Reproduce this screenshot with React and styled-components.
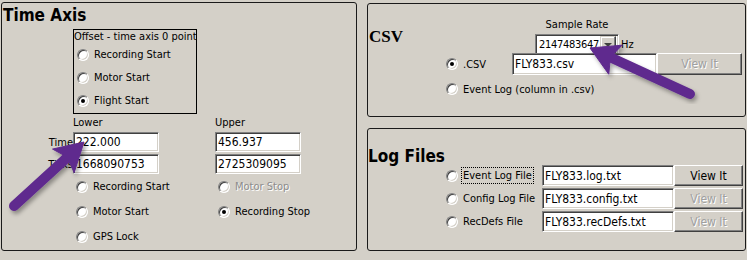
import React from 'react';
import styled, { createGlobalStyle } from 'styled-components';

const UI = `"DejaVu Sans Condensed", "Liberation Sans", sans-serif`;

const GlobalStyle = createGlobalStyle`
  body {
    margin: 0;
    background: #d4d0c8;
    font-family: ${UI};
    font-size: 11px;
    color: #000;
  }
`;

const Page = styled.div`
  position: relative;
  box-sizing: border-box;
  width: 747px;
  height: 260px;
  display: flex;
  padding: 2px 0 0 1px;
  gap: 10px;
`;

const Panel = styled.div`
  box-sizing: border-box;
  border: 1px solid #1a1a1a;
  border-radius: 3px;
  width: ${p => p.$w}px;
  height: ${p => p.$h}px;
  display: flex;
  flex-direction: column;
`;

const RightColumn = styled.div`
  display: flex;
  flex-direction: column;
  gap: 11px;
  padding-top: 1px;
`;

const Title = styled.div`
  box-sizing: border-box;
  flex: none;
  height: ${p => p.$h}px;
  width: ${p => (p.$w ? `${p.$w}px` : 'auto')};
  padding: ${p => p.$pt}px 0 0 ${p => p.$pl || 0}px;
  font-family: ${p => (p.$serif ? `"Liberation Serif", serif` : UI)};
  font-weight: bold;
  font-size: ${p => p.$size || 17}px;
  line-height: ${p => p.$lh || 20}px;
  white-space: nowrap;
`;

const OffsetBox = styled.div`
  box-sizing: border-box;
  margin-left: 71px;
  width: 124px;
  height: 85px;
  border: 1px solid #000;
  display: flex;
  flex-direction: column;
  padding-bottom: 1px;
`;

const BoxCaption = styled.div`
  height: 13px;
  line-height: 13px;
  white-space: nowrap;
`;

const RadioRow = styled.label`
  display: flex;
  align-items: center;
  height: ${p => p.$h}px;
  padding-left: ${p => p.$pl || 0}px;
  color: ${p => (p.$disabled ? '#8c8c8c' : '#000')};
  text-shadow: ${p => (p.$disabled ? '1px 1px #fff' : 'none')};
  white-space: nowrap;
`;

const Radio = styled.span`
  position: relative;
  box-sizing: border-box;
  flex: none;
  width: 12px;
  height: 12px;
  margin-right: 5px;
  border-radius: 50%;
  background: #fff;
  border: 1px solid;
  border-color: #808080 #ffffff #ffffff #808080;
  box-shadow: inset 1px 1px #404040, inset -1px -1px #d4d0c8;
  &::after {
    content: '';
    display: ${p => (p.$checked ? 'block' : 'none')};
    position: absolute;
    left: 3px;
    top: 3px;
    width: 4px;
    height: 4px;
    border-radius: 50%;
    background: #000;
  }
`;

const FieldGrid = styled.div`
  display: grid;
  grid-template-columns: 71px 142px 1fr;
  height: ${p => p.$h}px;
  margin-top: ${p => p.$mt || 0}px;
  align-items: center;
`;

const ColLabel = styled.div`
  align-self: start;
  padding-top: 2px;
  line-height: 14px;
`;

const RowLabel = styled.div`
  text-align: right;
  white-space: nowrap;
`;

const TextBox = styled.div`
  box-sizing: border-box;
  flex: none;
  width: ${p => p.$w}px;
  height: ${p => p.$h || 20}px;
  background: #fff;
  border: 1px solid;
  border-color: #808080 #ffffff #ffffff #808080;
  box-shadow: inset 1px 1px #404040, inset -1px -1px #d4d0c8;
  padding-left: 2px;
  display: flex;
  align-items: center;
  font-size: 12px;
  white-space: nowrap;
  overflow: hidden;
`;

const Button = styled.div`
  box-sizing: border-box;
  flex: none;
  width: ${p => p.$w}px;
  height: ${p => p.$h}px;
  background: #d4d0c8;
  border: 1px solid;
  border-color: #ffffff #404040 #404040 #ffffff;
  box-shadow: inset -1px -1px #808080, inset 1px 1px #d4d0c8;
  display: flex;
  align-items: center;
  justify-content: center;
  font-size: 12px;
  color: ${p => (p.$disabled ? '#a0a0a0' : '#000')};
  text-shadow: ${p => (p.$disabled ? '1px 1px #fff' : 'none')};
`;

const Header = styled.div`
  display: flex;
  height: 49px;
`;

const SampleBlock = styled.div`
  display: flex;
  flex-direction: column;
  padding-top: 14px;
`;

const SampleLabel = styled.div`
  width: 84px;
  height: 14px;
  line-height: 14px;
  text-align: center;
  white-space: nowrap;
`;

const ComboRow = styled.div`
  display: flex;
  align-items: center;
  gap: 2px;
  padding-top: 2px;
`;

const Combo = styled(TextBox)`
  height: 21px;
  padding: 0 2px 0 3px;
`;

const ComboText = styled.span`
  flex: 1;
  min-width: 0;
  font-size: 11px;
  letter-spacing: -0.3px;
`;

const DropButton = styled.span`
  box-sizing: border-box;
  flex: none;
  width: 16px;
  height: 17px;
  background: #d4d0c8;
  border: 1px solid;
  border-color: #d4d0c8 #404040 #404040 #d4d0c8;
  box-shadow: inset -1px -1px #808080, inset 1px 1px #fff;
  display: flex;
  align-items: center;
  justify-content: center;
  &::after {
    content: '';
    border-left: 4px solid transparent;
    border-right: 4px solid transparent;
    border-top: 4px solid #404040;
  }
`;

const FileRow = styled.div`
  display: flex;
  align-items: center;
  height: ${p => p.$h}px;
  margin-top: ${p => p.$mt || 0}px;
  padding-left: 78px;
`;

const FileLabel = styled.span`
  width: ${p => p.$w}px;
  white-space: nowrap;
  flex: none;
`;

const Focus = styled.span`
  outline: 1px dotted #000;
  outline-offset: 1px;
`;

const Overlay = styled.svg`
  position: absolute;
  left: 0;
  top: 0;
  pointer-events: none;
`;

function Arrow({ tail, tip, headLen = 28, headW = 32, width = 10 }) {
  const dx = tip[0] - tail[0];
  const dy = tip[1] - tail[1];
  const len = Math.hypot(dx, dy);
  const ux = dx / len;
  const uy = dy / len;
  const nx = -uy;
  const ny = ux;
  const bx = tip[0] - ux * headLen;
  const by = tip[1] - uy * headLen;
  const nb = headLen - 4;
  const half = width / 2 * 0.9;
  const pts = [
    [tip[0], tip[1]],
    [bx + nx * headW / 2, by + ny * headW / 2],
    [tip[0] - ux * nb + nx * half, tip[1] - uy * nb + ny * half],
    [tip[0] - ux * nb - nx * half, tip[1] - uy * nb - ny * half],
    [bx - nx * headW / 2, by - ny * headW / 2],
  ];
  return (
    <g filter="url(#shadow)" fill="#5f2a8e" stroke="#5f2a8e">
      <line x1={tail[0]} y1={tail[1]} x2={bx + ux * 4} y2={by + uy * 4} strokeWidth={width} strokeLinecap="round" />
      <polygon points={pts.map(p => p.join(',')).join(' ')} strokeWidth="1" strokeLinejoin="round" />
    </g>
  );
}

function Option({ checked, children, ...rest }) {
  return (
    <RadioRow {...rest}>
      <Radio $checked={checked} />
      {children}
    </RadioRow>
  );
}

export default function App() {
  return (
    <>
      <GlobalStyle />
      <Page>
        <Panel $w={356} $h={249}>
          <Title $h={26} $pt={2} $pl={1}>Time Axis</Title>
          <OffsetBox>
            <BoxCaption>Offset - time axis 0 point</BoxCaption>
            <Option $h={23} $pl={3}>Recording Start</Option>
            <Option $h={23} $pl={3}>Motor Start</Option>
            <Option $h={23} $pl={3} checked>Flight Start</Option>
          </OffsetBox>

          <FieldGrid $h={16}>
            <span />
            <ColLabel>Lower</ColLabel>
            <ColLabel>Upper</ColLabel>
          </FieldGrid>
          <FieldGrid $h={20} $mt={2}>
            <RowLabel>Time</RowLabel>
            <TextBox $w={86}>222.000</TextBox>
            <TextBox $w={86}>456.937</TextBox>
          </FieldGrid>
          <FieldGrid $h={20} $mt={2}>
            <RowLabel>Ticks</RowLabel>
            <TextBox $w={86}>1668090753</TextBox>
            <TextBox $w={86}>2725309095</TextBox>
          </FieldGrid>
          <FieldGrid $h={25}>
            <span />
            <Option $h={25} $pl={3}>Recording Start</Option>
            <Option $h={25} $pl={3} $disabled>Motor Stop</Option>
          </FieldGrid>
          <FieldGrid $h={25}>
            <span />
            <Option $h={25} $pl={3}>Motor Start</Option>
            <Option $h={25} $pl={3} checked>Recording Stop</Option>
          </FieldGrid>
          <FieldGrid $h={25}>
            <span />
            <Option $h={25} $pl={3}>GPS Lock</Option>
          </FieldGrid>
        </Panel>

        <RightColumn>
          <Panel $w={379} $h={114}>
            <Header>
              <Title $h={49} $w={167} $pt={23} $pl={1} $serif>CSV</Title>
              <SampleBlock>
                <SampleLabel>Sample Rate</SampleLabel>
                <ComboRow>
                  <Combo $w={84}>
                    <ComboText>2147483647</ComboText>
                    <DropButton />
                  </Combo>
                  <span>Hz</span>
                </ComboRow>
              </SampleBlock>
            </Header>
            <FileRow $h={22}>
              <Radio $checked />
              <FileLabel $w={49}>.CSV</FileLabel>
              <TextBox $w={145} $h={22}>FLY833.csv</TextBox>
              <Button $w={85} $h={22} $disabled>View It</Button>
            </FileRow>
            <FileRow $h={22} $mt={3}>
              <Radio />
              <FileLabel $w={200}>Event Log (column in .csv)</FileLabel>
            </FileRow>
          </Panel>

          <Panel $w={379} $h={123}>
            <Title $h={36} $pt={18} $lh={18}>Log Files</Title>
            <FileRow $h={21}>
              <Radio />
              <FileLabel $w={79}><Focus>Event Log File</Focus></FileLabel>
              <TextBox $w={132} $h={21}>FLY833.log.txt</TextBox>
              <Button $w={69} $h={21}>View It</Button>
            </FileRow>
            <FileRow $h={21} $mt={2}>
              <Radio />
              <FileLabel $w={79}>Config Log File</FileLabel>
              <TextBox $w={132} $h={21}>FLY833.config.txt</TextBox>
              <Button $w={69} $h={21} $disabled>View It</Button>
            </FileRow>
            <FileRow $h={21} $mt={2}>
              <Radio />
              <FileLabel $w={79}>RecDefs File</FileLabel>
              <TextBox $w={132} $h={21}>FLY833.recDefs.txt</TextBox>
              <Button $w={69} $h={21} $disabled>View It</Button>
            </FileRow>
          </Panel>
        </RightColumn>

        <Overlay width="747" height="260" viewBox="0 0 747 260">
          <defs>
            <filter id="shadow" x="-20%" y="-20%" width="140%" height="140%">
              <feDropShadow dx="2" dy="3" stdDeviation="2" floodColor="#000" floodOpacity="0.35" />
            </filter>
          </defs>
          <Arrow tail={[14, 206]} tip={[84, 142]} />
          <Arrow tail={[690, 94]} tip={[590, 48]} />
        </Overlay>
      </Page>
    </>
  );
}
